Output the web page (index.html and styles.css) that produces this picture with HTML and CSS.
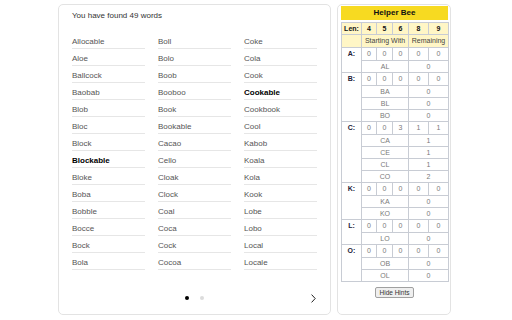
FILE: index.html
```html
<!DOCTYPE html>
<html lang="en">
<head>
    <meta charset="UTF-8">
    <meta name="viewport" content="width=device-width, initial-scale=1.0">
    <title>Spelling Bee - Helper Bee</title>
    <link rel="stylesheet" href="styles.css">
</head>
<body>
    <div class="page">
        <section class="found-panel">
            <p class="found-count">You have found 49 words</p>
            <ul class="word-list">
                <li>Allocable</li>
                <li>Aloe</li>
                <li>Ballcock</li>
                <li>Baobab</li>
                <li>Blob</li>
                <li>Bloc</li>
                <li>Block</li>
                <li class="pangram">Blockable</li>
                <li>Bloke</li>
                <li>Boba</li>
                <li>Bobble</li>
                <li>Bocce</li>
                <li>Bock</li>
                <li>Bola</li>
                <li>Boll</li>
                <li>Bolo</li>
                <li>Boob</li>
                <li>Booboo</li>
                <li>Book</li>
                <li>Bookable</li>
                <li>Cacao</li>
                <li>Cello</li>
                <li>Cloak</li>
                <li>Clock</li>
                <li>Coal</li>
                <li>Coca</li>
                <li>Cock</li>
                <li>Cocoa</li>
                <li>Coke</li>
                <li>Cola</li>
                <li>Cook</li>
                <li class="pangram">Cookable</li>
                <li>Cookbook</li>
                <li>Cool</li>
                <li>Kabob</li>
                <li>Koala</li>
                <li>Kola</li>
                <li>Kook</li>
                <li>Lobe</li>
                <li>Lobo</li>
                <li>Local</li>
                <li>Locale</li>
            </ul>
            <div class="pager">
                <span></span>
                <div class="dots">
                    <span class="dot active"></span>
                    <span class="dot"></span>
                </div>
                <svg class="next" width="5" height="9" viewBox="0 0 5 9">
                    <path d="M0.6 0.6 L4.2 4.5 L0.6 8.4" fill="none" stroke="#222" stroke-width="1"/>
                </svg>
            </div>
        </section>

        <aside class="hint-panel">
            <div class="hint-title">Helper Bee</div>
            <table class="hint-grid">
                <colgroup>
                    <col class="c-label">
                    <col class="c-4">
                    <col class="c-5">
                    <col class="c-6">
                    <col class="c-8">
                    <col class="c-9">
                </colgroup>
                <tr class="head">
                    <th>Len:</th><th>4</th><th>5</th><th>6</th><th>8</th><th>9</th>
                </tr>
                <tr class="head sub-head">
                    <th></th><th colspan="3">Starting With</th><th colspan="2">Remaining</th>
                </tr>

                <tr class="letter-row">
                    <th rowspan="2">A:</th><td>0</td><td>0</td><td>0</td><td>0</td><td>0</td>
                </tr>
                <tr><td colspan="3">AL</td><td colspan="2">0</td></tr>

                <tr class="letter-row">
                    <th rowspan="4">B:</th><td>0</td><td>0</td><td>0</td><td>0</td><td>0</td>
                </tr>
                <tr><td colspan="3">BA</td><td colspan="2">0</td></tr>
                <tr><td colspan="3">BL</td><td colspan="2">0</td></tr>
                <tr><td colspan="3">BO</td><td colspan="2">0</td></tr>

                <tr class="letter-row">
                    <th rowspan="5">C:</th><td>0</td><td>0</td><td>3</td><td>1</td><td>1</td>
                </tr>
                <tr><td colspan="3">CA</td><td colspan="2">1</td></tr>
                <tr><td colspan="3">CE</td><td colspan="2">1</td></tr>
                <tr><td colspan="3">CL</td><td colspan="2">1</td></tr>
                <tr><td colspan="3">CO</td><td colspan="2">2</td></tr>

                <tr class="letter-row">
                    <th rowspan="3">K:</th><td>0</td><td>0</td><td>0</td><td>0</td><td>0</td>
                </tr>
                <tr><td colspan="3">KA</td><td colspan="2">0</td></tr>
                <tr><td colspan="3">KO</td><td colspan="2">0</td></tr>

                <tr class="letter-row">
                    <th rowspan="2">L:</th><td>0</td><td>0</td><td>0</td><td>0</td><td>0</td>
                </tr>
                <tr><td colspan="3">LO</td><td colspan="2">0</td></tr>

                <tr class="letter-row">
                    <th rowspan="3">O:</th><td>0</td><td>0</td><td>0</td><td>0</td><td>0</td>
                </tr>
                <tr><td colspan="3">OB</td><td colspan="2">0</td></tr>
                <tr><td colspan="3">OL</td><td colspan="2">0</td></tr>
            </table>
            <div class="hint-actions">
                <button class="hide-btn">Hide Hints</button>
            </div>
        </aside>
    </div>
</body>
</html>
```

FILE: styles.css
```css
body {
    margin: 0;
    background-color: #fff;
    font-family: "Liberation Sans", Arial, sans-serif;
    color: #222;
}
.page {
    display: flex;
    gap: 6px;
    padding: 4px 0 0 58px;
}

/* found words panel */
.found-panel {
    box-sizing: border-box;
    width: 273px;
    height: 311px;
    border: 1px solid #e3e3e3;
    border-radius: 5px;
    padding: 6px 14px 0 13px;
}
.found-count {
    margin: 0 0 11px;
    font-size: 8px;
    line-height: 10px;
    color: #333;
}
.word-list {
    list-style: none;
    margin: 0;
    padding: 0;
    display: grid;
    grid-auto-flow: column;
    grid-template-rows: repeat(14, 17px);
    grid-template-columns: repeat(3, 73px);
    column-gap: 13px;
}
.word-list li {
    box-sizing: border-box;
    padding-top: 5px;
    font-size: 8px;
    line-height: 10px;
    color: #555;
    border-bottom: 1px solid #e6e6e6;
}
.word-list li.pangram {
    font-weight: bold;
    color: #000;
}
.pager {
    margin-top: 22px;
    height: 12px;
    display: grid;
    grid-template-columns: 1fr auto 1fr;
    align-items: center;
}
.dots {
    display: flex;
    gap: 11px;
}
.dot {
    width: 4px;
    height: 4px;
    border-radius: 50%;
    background-color: #dcdcdc;
}
.dot.active {
    background-color: #000;
}
.next {
    justify-self: end;
}

/* helper bee panel */
.hint-panel {
    box-sizing: border-box;
    width: 114px;
    height: 311px;
    border: 1px solid #e3e3e3;
    border-radius: 5px;
    padding: 1px 2px 0 3px;
}
.hint-title {
    height: 14px;
    line-height: 14px;
    margin-bottom: 2px;
    background-color: #f7da21;
    text-align: center;
    font-size: 8px;
    font-weight: bold;
    color: #111;
}
.hint-grid {
    width: 107px;
    table-layout: fixed;
    border-collapse: collapse;
    font-size: 7px;
    text-align: center;
}
.c-label { width: 20px; }
.c-4 { width: 15px; }
.c-5 { width: 16px; }
.c-6 { width: 16px; }
.c-8 { width: 20px; }
.c-9 { width: 20px; }
.hint-grid th,
.hint-grid td {
    border: 1px solid #c8ccd4;
    padding: 0;
    line-height: 8px;
}
.hint-grid tr {
    height: 12px;
}
.hint-grid tr.letter-row {
    height: 13px;
}
.hint-grid tr.sub-head {
    height: 13px;
}
.hint-grid .head th {
    background-color: #fff6c6;
    color: #111;
}
.hint-grid .sub-head th {
    font-weight: normal;
    color: #444;
}
.hint-grid .letter-row th {
    vertical-align: top;
    padding-top: 2px;
    color: #1d1d3a;
}
.hint-grid td {
    color: #7a7a7a;
}
.hint-actions {
    display: flex;
    justify-content: center;
    margin-top: 5px;
}
.hide-btn {
    height: 11px;
    padding: 0 4px;
    font-family: "Liberation Sans", Arial, sans-serif;
    font-size: 6.5px;
    line-height: 9px;
    color: #333;
    background-color: #efefef;
    border: 1px solid #a0a0a0;
    border-radius: 2px;
}
```
